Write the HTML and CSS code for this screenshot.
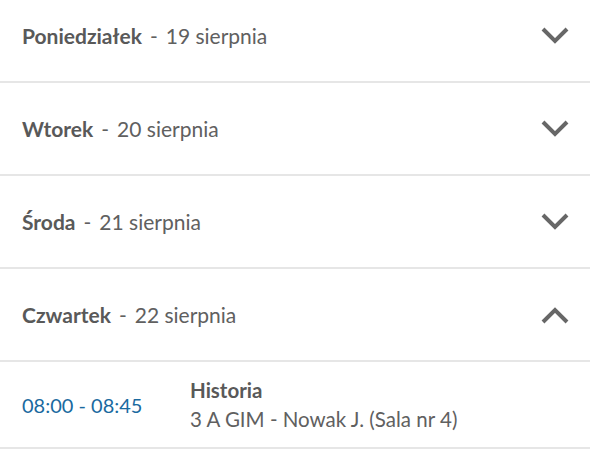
FILE: index.html
```html
<!DOCTYPE html>
<html lang="pl">
<head>
    <meta charset="UTF-8" />
    <meta name="viewport" content="width=device-width, initial-scale=1.0" />
    <title>Plan lekcji</title>
    <link rel="stylesheet" href="styles.css">
</head>
<body>
    <div class="days">
        <div class="day">
            <div class="day-head">
                <span class="day-name">Poniedziałek</span>
                <span class="day-sep">-</span>
                <span class="day-date">19 sierpnia</span>
                <svg class="chevron" viewBox="0 0 28 18"><polyline points="2,2 14,14 26,2" /></svg>
            </div>
        </div>
        <div class="day">
            <div class="day-head">
                <span class="day-name">Wtorek</span>
                <span class="day-sep">-</span>
                <span class="day-date">20 sierpnia</span>
                <svg class="chevron" viewBox="0 0 28 18"><polyline points="2,2 14,14 26,2" /></svg>
            </div>
        </div>
        <div class="day">
            <div class="day-head">
                <span class="day-name">Środa</span>
                <span class="day-sep">-</span>
                <span class="day-date">21 sierpnia</span>
                <svg class="chevron" viewBox="0 0 28 18"><polyline points="2,2 14,14 26,2" /></svg>
            </div>
        </div>
        <div class="day open">
            <div class="day-head">
                <span class="day-name">Czwartek</span>
                <span class="day-sep">-</span>
                <span class="day-date">22 sierpnia</span>
                <svg class="chevron" viewBox="0 0 28 18"><polyline points="2,16 14,4 26,16" /></svg>
            </div>
            <div class="lesson">
                <div class="lesson-time">08:00 - 08:45</div>
                <div class="lesson-info">
                    <div class="lesson-subject">Historia</div>
                    <div class="lesson-details">3 A GIM - Nowak J. (Sala nr 4)</div>
                </div>
            </div>
        </div>
    </div>
</body>
</html>
```

FILE: styles.css
```css
html, body {
    margin: 0;
    padding: 0;
    background: #fff;
    overflow: hidden;
}

body {
    font-family: Lato, "Noto Sans", sans-serif;
    color: #606060;
}

.days {
    margin-top: -10px;
}

.day {
    border-bottom: 2px solid #e6e6e6;
}

.day-head {
    height: 91px;
    display: flex;
    align-items: center;
    padding: 0 21px 0 22px;
    font-size: 21px;
}

.day-name {
    font-weight: bold;
    color: #595959;
}

.day-sep {
    margin: 0 8px 0 8px;
}

.day-date {
    flex: 1;
}

.chevron {
    width: 28px;
    height: 18px;
    fill: none;
    stroke: #676767;
    stroke-width: 4;
}

.lesson {
    border-top: 2px solid #e6e6e6;
    height: 85px;
    display: flex;
    align-items: center;
    padding: 0 22px;
    font-size: 20.5px;
}

.lesson-time {
    width: 168px;
    font-size: 20px;
    color: #1a6aa0;
}

.lesson-subject {
    font-weight: bold;
    color: #595959;
    margin-bottom: 5px;
}
```
